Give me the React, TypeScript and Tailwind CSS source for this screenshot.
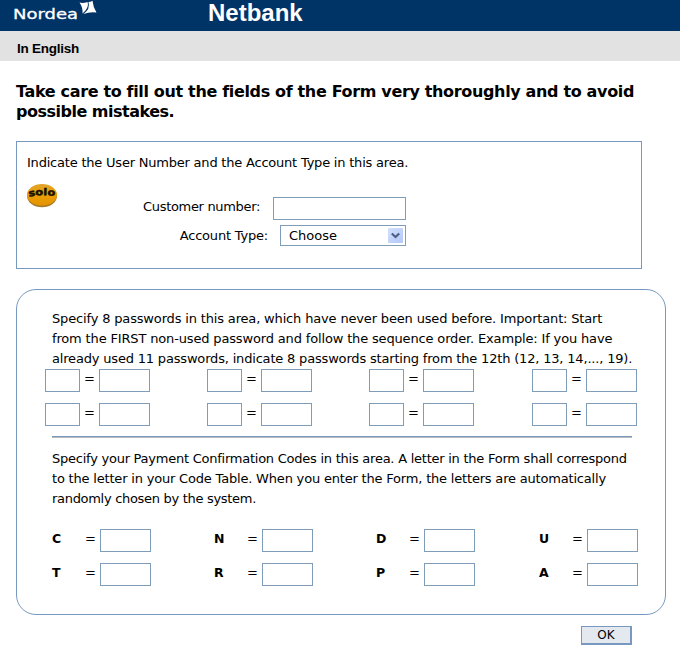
const sans = "font-['DejaVu_Sans',sans-serif]";

function Box({ className }: { className: string }) {
  return <span className={`block h-[23px] shrink-0 border border-[#7f9db9] bg-white ${className}`} />;
}

function Logo() {
  return (
    <svg width="90" height="24" viewBox="0 0 90 24" className="ml-2.5 shrink-0">
      <text x="3" y="18.500" fontFamily="DejaVu Sans, sans-serif" fontSize="14.500" fill="#fff" stroke="#fff" strokeWidth="0.3" textLength="65" lengthAdjust="spacingAndGlyphs">
        Nordea
      </text>
      <path d="M69.500 2.500 Q73 3.500 77.500 2 Q79 6 75.500 10.500 L72.500 13.500 Q73 7.500 69.500 2.500Z" fill="#fff" />
      <path d="M78.500 2 Q80.500 2 82.500 0.800 Q83 7 86.500 12.500 Q80 11.500 73.500 14 Q80.500 9 78.500 2Z" fill="#fff" />
    </svg>
  );
}

function Solo() {
  return (
    <svg width="32" height="26" viewBox="1 0 32 26" className="block">
      <defs>
        <linearGradient id="gold" x1="0" y1="0" x2="0" y2="1">
          <stop offset="0" stopColor="#dfa42c" />
          <stop offset="0.5" stopColor="#ee9f05" />
          <stop offset="1" stopColor="#e29400" />
        </linearGradient>
      </defs>
      <ellipse cx="16" cy="13" rx="15" ry="11.300" fill="#a8792a" />
      <ellipse cx="16" cy="11.800" rx="15" ry="10.800" fill="url(#gold)" />
      <path id="arc" d="M3 13.800 Q16 11 29.500 13.300" fill="none" />
      <text fontFamily="DejaVu Sans, sans-serif" fontWeight="700" fontSize="9.500" fill="#171000" stroke="#171000" strokeWidth="0.5">
        <textPath href="#arc" textLength="26" lengthAdjust="spacingAndGlyphs">solo</textPath>
      </text>
    </svg>
  );
}

const columns = ["w-[162px]", "w-[162px]", "w-[163px]", "w-[110px]"];

function PasswordRow() {
  return (
    <div className="flex h-[34px] items-start">
      {columns.map((width, i) => (
        <div key={i} className={`flex items-start ${width}`}>
          <Box className="w-[35px]" />
          <span className="w-[19px] text-center leading-5">=</span>
          <Box className="w-[51px]" />
        </div>
      ))}
    </div>
  );
}

function CodeRow({ letters }: { letters: string[] }) {
  return (
    <div className="flex h-[34px] items-start">
      {letters.map((letter, i) => (
        <div key={letter} className={`flex items-start ${columns[i]}`}>
          <span className="w-[33px] text-[12.500px] leading-5 font-bold">{letter}</span>
          <span className="w-[15px] leading-5">=</span>
          <Box className="w-[51px]" />
        </div>
      ))}
    </div>
  );
}

export default function App() {
  return (
    <div className={`h-[657px] w-[680px] overflow-hidden bg-white text-[13px] text-black ${sans}`}>
      <header className="flex h-[31px] items-start bg-[#003366]">
        <Logo />
        <span className="ml-[108px] font-['Liberation_Sans',Arial,sans-serif] text-[24px] leading-[26px] font-bold text-white">
          Netbank
        </span>
      </header>
      <div className="flex h-[30px] items-center bg-[#e2e2e2] pt-[6px] pl-[17px] font-['Liberation_Sans',Arial,sans-serif] text-[13.500px] font-bold tracking-[-0.25px]">
        In English
      </div>

      <h1 className="mt-[21px] ml-4 text-[16px] leading-5 font-bold whitespace-nowrap">
        <span className="block tracking-[-0.345px]">Take care to fill out the fields of the Form very thoroughly and to avoid</span>
        <span className="block tracking-[-0.5px]">possible mistakes.</span>
      </h1>

      <section className="mt-[19px] ml-4 h-[128px] w-[626px] border border-[#7799bf] pt-[11px] pl-[10px]">
        <p className="leading-5 tracking-[-0.21px] whitespace-nowrap">Indicate the User Number and the Account Type in this area.</p>
        <div className="flex pt-[10px]">
          <Solo />
          <div className="flex w-[347px] flex-col items-end pt-[14px]">
            <div className="flex items-start">
              <span className="mr-[13px] leading-5 tracking-[-0.33px]">Customer number:</span>
              <Box className="w-[133px]" />
            </div>
            <div className="mt-[5px] flex items-start">
              <span className="mr-[12px] leading-[22px] tracking-[-0.2px]">Account Type:</span>
              <div className="flex h-[21px] w-[126px] items-center justify-between border border-[#7f9db9] pr-[2px] pl-2">
                <span>Choose</span>
                <span className="flex h-[15px] w-[15px] items-center justify-center rounded-[1px] bg-linear-to-br from-[#d3e0fd] to-[#b3c8f8]">
                  <svg width="9" height="7" viewBox="0 0 9 7">
                    <path d="M0.800 1.500 L4.500 5 L8.200 1.500" fill="none" stroke="#4d6185" strokeWidth="2.200" />
                  </svg>
                </span>
              </div>
            </div>
          </div>
        </div>
      </section>

      <section className="mt-5 ml-4 h-[326px] w-[650px] rounded-[20px] border border-[#7799bf] pt-[19px]">
        <p className="ml-[35px] leading-5 whitespace-nowrap">
          <span className="block tracking-[-0.16px]">Specify 8 passwords in this area, which have never been used before. Important: Start</span>
          <span className="block tracking-[-0.155px]">from the FIRST non-used password and follow the sequence order. Example: If you have</span>
          <span className="block tracking-[-0.18px]">already used 11 passwords, indicate 8 passwords starting from the 12th (12, 13, 14,..., 19).</span>
        </p>
        <div className="ml-7">
          <PasswordRow />
          <PasswordRow />
        </div>
        <div className="mt-[-1px] ml-[35px] h-[2px] w-[580px] border-b border-[#b9b9b9] bg-[#7799bf]" />
        <p className="mt-[11px] ml-[35px] leading-5 whitespace-nowrap">
          <span className="block tracking-[-0.245px]">Specify your Payment Confirmation Codes in this area. A letter in the Form shall correspond</span>
          <span className="block tracking-[-0.19px]">to the letter in your Code Table. When you enter the Form, the letters are automatically</span>
          <span className="block tracking-[-0.3px]">randomly chosen by the system.</span>
        </p>
        <div className="mt-5 ml-[35px]">
          <CodeRow letters={["C", "N", "D", "U"]} />
          <CodeRow letters={["T", "R", "P", "A"]} />
        </div>
      </section>

      <div className="mt-[11px] ml-[581px] flex h-[19px] w-[51px] items-center justify-center border border-r-2 border-b-2 border-[#7799bf] bg-[#e3e9ef] text-[12px]">
        OK
      </div>
    </div>
  );
}
